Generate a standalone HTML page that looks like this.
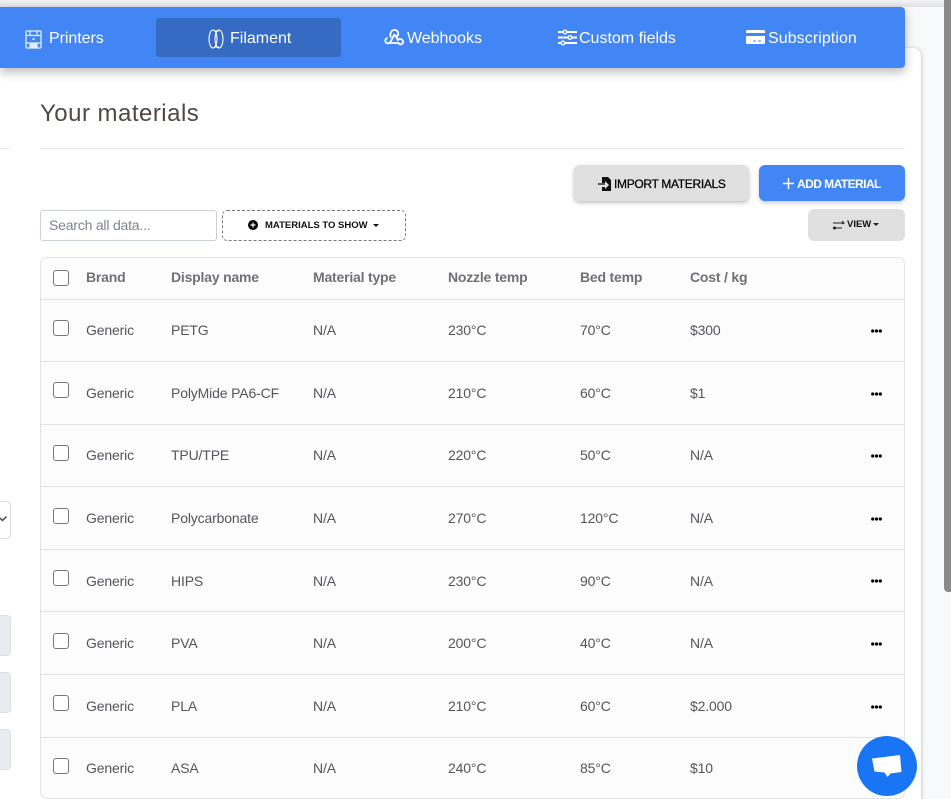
<!DOCTYPE html>
<html><head><meta charset="utf-8">
<style>
html,body{margin:0;padding:0;width:951px;height:799px;overflow:hidden;background:#f8f9fb;font-family:"Liberation Sans",sans-serif}
#r{position:relative;width:951px;height:799px;overflow:hidden}
#r div,#r span.a,#r svg{position:absolute}
.t{position:absolute;white-space:nowrap;line-height:20px}
.n{color:#fff;font-size:16px;top:28px}
.h{font-weight:bold;font-size:14px;color:#707076;top:267px;letter-spacing:-.2px}
.c{font-size:14px;color:#55555b;letter-spacing:-.15px}
.cb{left:53px;width:14px;height:14px;border:1px solid #77777c;border-radius:3px;background:#fff}
.ln{left:41px;width:863px;height:1px;background:#e2e3e7}
.dots{left:871px;width:11px;height:4px}
</style></head><body><div id="r">
<div style="left:0;top:0;width:951px;height:7px;background:linear-gradient(#f3f3f5,#e2e2e6)"></div>
<div style="left:0;top:48px;width:921px;height:760px;background:#fff;border-radius:0 8px 0 0;box-shadow:1px 0 3px rgba(0,0,0,.18)"></div>
<div style="left:944px;top:0;width:7px;height:592px;background:#8a8a8a;border-radius:0 0 0 4px"></div>

<div style="left:0;top:7px;width:905px;height:61px;background:#4285f4;border-radius:0 4px 4px 0;box-shadow:0 4px 10px rgba(0,0,0,.28)"></div>
<div style="left:156px;top:18px;width:185px;height:39px;background:#366bc3;border-radius:3px"></div>

<svg style="left:25px;top:30px" width="17" height="19" viewBox="0 0 17 19" fill="none" stroke="#fff" stroke-width="1.300" opacity=".85"><rect x="1" y="1" width="15" height="17" rx="1"/><path d="M1 5.500h15M5 1v4.500M12 1v4.500M1 13h15"/><path d="M5 17v-3h7v3z" fill="#fff"/><path d="M8.500 8v2" stroke-width="2"/></svg>
<span class="t n" style="left:49px;top:28px;letter-spacing:-.05px;top:29px">Printers</span>

<svg style="left:208px;top:29px" width="16" height="20" viewBox="0 0 16 20" fill="none" stroke="#fff" stroke-width="1.100"><ellipse cx="5" cy="10" rx="4" ry="9"/><ellipse cx="11" cy="10" rx="4" ry="9"/><path d="M6 2h5M6 18h5"/></svg>
<span class="t n" style="left:230px;top:29px">Filament</span>

<svg style="left:384px;top:28px" width="20" height="20" viewBox="0 0 20 20" fill="none" stroke="#fff" stroke-width="1.800"><path d="M7 9.500C5.500 7 6.500 2 10.500 2c3.500 0 4.500 3.500 3 6l-3-0.500"/><path d="M10.500 6L7 13c-1 2-3 3-4.500 2-2-1.200-1.500-4.500 1-5"/><path d="M6 15h8.500c1.500 2.500 5 1 4.500-1.500-.4-2.500-3.500-3.500-5-1.500L11 7"/></svg>
<span class="t n" style="left:407px;top:29px;letter-spacing:-.05px">Webhooks</span>

<svg style="left:558px;top:29px" width="19" height="17" viewBox="0 0 19 17" fill="none" stroke="#fff" stroke-width="1.900"><path d="M0 3h5M9 3h10M0 8.500h10M14 8.500h5M0 14h3M7 14h12"/><circle cx="7" cy="3" r="1.800" stroke-width="1.400"/><circle cx="12" cy="8.500" r="1.800" stroke-width="1.400"/><circle cx="5" cy="14" r="1.800" stroke-width="1.400"/></svg>
<span class="t n" style="left:579px;top:29px">Custom fields</span>

<svg style="left:746px;top:30px" width="19" height="14" viewBox="0 0 19 14"><rect width="19" height="14" rx="1.500" fill="#fff"/><rect y="3" width="19" height="3" fill="#4285f4"/><path d="M7 11h3M12 11h3" stroke="#4285f4"/></svg>
<span class="t n" style="left:768px;top:29px;letter-spacing:.07px">Subscription</span>

<span class="t" style="left:40px;top:100px;font-size:24px;line-height:28px;color:#4f4945;letter-spacing:.48px">Your materials</span>
<div style="left:40px;top:148px;width:865px;height:1px;background:#e9eaed"></div>
<div style="left:0;top:148px;width:10px;height:1px;background:#e9eaed"></div>

<div style="left:574px;top:165px;width:175px;height:36px;background:#e0e0e0;border-radius:6px;box-shadow:0 2px 4px rgba(0,0,0,.25)"></div>
<svg style="left:598px;top:177px" width="14" height="14" viewBox="0 0 14 14"><path d="M4 0h6l3 3v11H4v-4h3v2l4-4-4-4v2H4z" fill="#111"/><path d="M0 7h7" stroke="#111" stroke-width="1.300"/></svg>
<span class="t" style="left:614px;top:174px;font-size:12px;color:#000;letter-spacing:-.32px;-webkit-text-stroke:.25px #000">IMPORT MATERIALS</span>

<div style="left:759px;top:165px;width:146px;height:36px;background:#4285f4;border-radius:6px;box-shadow:0 2px 4px rgba(0,0,0,.2)"></div>
<svg style="left:783px;top:178px" width="11" height="11" viewBox="0 0 11 11"><path d="M5.500 0v11M0 5.500h11" stroke="#fff" stroke-width="1.400"/></svg>
<span class="t" style="left:797px;top:174px;font-size:12px;font-weight:bold;color:#fff;letter-spacing:-.55px">ADD MATERIAL</span>

<div style="left:808px;top:209px;width:97px;height:32px;background:#e0e0e0;border-radius:6px"></div>
<svg style="left:833px;top:220px" width="12" height="10" viewBox="0 0 12 10" fill="none" stroke="#222"><path d="M0 3h11M0 8h9"/><path d="M9 1l2 2-2 1"/><circle cx="1.500" cy="8" r="1"/></svg>
<span class="t" style="left:847px;top:215px;font-size:9.500px;font-weight:bold;color:#111">VIEW</span>
<div style="left:873px;top:223px;width:0;height:0;border:3px solid transparent;border-top-color:#222;border-bottom:0"></div>

<div style="left:40px;top:210px;width:175px;height:29px;border:1px solid #ccd0d8;border-radius:3px;background:#fff"></div>
<span class="t" style="left:49px;top:215px;font-size:14px;color:#7f848c;letter-spacing:-.2px">Search all data...</span>
<div style="left:222px;top:210px;width:182px;height:29px;border:1px dashed #77777c;border-radius:5px;background:#fff"></div>
<svg style="left:248px;top:220px" width="10" height="10" viewBox="0 0 10 10"><circle cx="5" cy="5" r="5" fill="#000"/><path d="M5 2.500v5M2.500 5h5" stroke="#fff" stroke-width="1.200"/></svg>
<span class="t" style="left:265px;top:216px;font-size:9.500px;font-weight:bold;color:#111">MATERIALS TO SHOW</span>
<div style="left:373px;top:224px;width:0;height:0;border:3px solid transparent;border-top-color:#111;border-bottom:0"></div>

<div style="left:-10px;top:501px;width:19px;height:36px;border:1px solid #d5d8dd;border-radius:4px;background:#fff"></div>
<svg style="left:0;top:516px" width="7" height="6" viewBox="0 0 7 6" fill="none" stroke="#444" stroke-width="1.500"><path d="M0 2l2.500 2.500L6.500 0.500"/></svg>
<div style="left:-10px;top:615px;width:19px;height:39px;border:1px solid #dcdfe3;border-radius:4px;background:#e9ecef"></div>
<div style="left:-10px;top:672px;width:19px;height:39px;border:1px solid #dcdfe3;border-radius:4px;background:#e9ecef"></div>
<div style="left:-10px;top:729px;width:19px;height:39px;border:1px solid #dcdfe3;border-radius:4px;background:#e9ecef"></div>

<div style="left:40px;top:257px;width:863px;height:540px;background:#fcfcfc;border:1px solid #e2e3e7;border-radius:7px"></div>
<div class="ln" style="top:299px"></div><div class="ln" style="top:361px"></div><div class="ln" style="top:424px"></div><div class="ln" style="top:486px"></div><div class="ln" style="top:549px"></div><div class="ln" style="top:611px"></div><div class="ln" style="top:674px"></div><div class="ln" style="top:737px"></div>

<div class="cb" style="top:270px"></div>
<span class="t h" style="left:86px">Brand</span><span class="t h" style="left:171px">Display name</span><span class="t h" style="left:313px">Material type</span><span class="t h" style="left:448px">Nozzle temp</span><span class="t h" style="left:580px">Bed temp</span><span class="t h" style="left:690px">Cost / kg</span>

<div class="cb" style="top:320px"></div>
<span class="t c" style="left:86px;top:320px">Generic</span><span class="t c" style="left:171px;top:320px">PETG</span><span class="t c" style="left:313px;top:320px">N/A</span><span class="t c" style="left:448px;top:320px">230°C</span><span class="t c" style="left:580px;top:320px">70°C</span><span class="t c" style="left:690px;top:320px">$300</span>
<svg class="dots" style="top:329px" viewBox="0 0 11 4"><circle cx="1.700" cy="2" r="1.600"/><circle cx="5.500" cy="2" r="1.600"/><circle cx="9.300" cy="2" r="1.600"/></svg>

<div class="cb" style="top:382px"></div>
<span class="t c" style="left:86px;top:383px">Generic</span><span class="t c" style="left:171px;top:383px">PolyMide PA6-CF</span><span class="t c" style="left:313px;top:383px">N/A</span><span class="t c" style="left:448px;top:383px">210°C</span><span class="t c" style="left:580px;top:383px">60°C</span><span class="t c" style="left:690px;top:383px">$1</span>
<svg class="dots" style="top:392px" viewBox="0 0 11 4"><circle cx="1.700" cy="2" r="1.600"/><circle cx="5.500" cy="2" r="1.600"/><circle cx="9.300" cy="2" r="1.600"/></svg>

<div class="cb" style="top:445px"></div>
<span class="t c" style="left:86px;top:445px">Generic</span><span class="t c" style="left:171px;top:445px">TPU/TPE</span><span class="t c" style="left:313px;top:445px">N/A</span><span class="t c" style="left:448px;top:445px">220°C</span><span class="t c" style="left:580px;top:445px">50°C</span><span class="t c" style="left:690px;top:445px">N/A</span>
<svg class="dots" style="top:454px" viewBox="0 0 11 4"><circle cx="1.700" cy="2" r="1.600"/><circle cx="5.500" cy="2" r="1.600"/><circle cx="9.300" cy="2" r="1.600"/></svg>

<div class="cb" style="top:508px"></div>
<span class="t c" style="left:86px;top:508px">Generic</span><span class="t c" style="left:171px;top:508px">Polycarbonate</span><span class="t c" style="left:313px;top:508px">N/A</span><span class="t c" style="left:448px;top:508px">270°C</span><span class="t c" style="left:580px;top:508px">120°C</span><span class="t c" style="left:690px;top:508px">N/A</span>
<svg class="dots" style="top:517px" viewBox="0 0 11 4"><circle cx="1.700" cy="2" r="1.600"/><circle cx="5.500" cy="2" r="1.600"/><circle cx="9.300" cy="2" r="1.600"/></svg>

<div class="cb" style="top:570px"></div>
<span class="t c" style="left:86px;top:571px">Generic</span><span class="t c" style="left:171px;top:571px">HIPS</span><span class="t c" style="left:313px;top:571px">N/A</span><span class="t c" style="left:448px;top:571px">230°C</span><span class="t c" style="left:580px;top:571px">90°C</span><span class="t c" style="left:690px;top:571px">N/A</span>
<svg class="dots" style="top:579px" viewBox="0 0 11 4"><circle cx="1.700" cy="2" r="1.600"/><circle cx="5.500" cy="2" r="1.600"/><circle cx="9.300" cy="2" r="1.600"/></svg>

<div class="cb" style="top:633px"></div>
<span class="t c" style="left:86px;top:633px">Generic</span><span class="t c" style="left:171px;top:633px">PVA</span><span class="t c" style="left:313px;top:633px">N/A</span><span class="t c" style="left:448px;top:633px">200°C</span><span class="t c" style="left:580px;top:633px">40°C</span><span class="t c" style="left:690px;top:633px">N/A</span>
<svg class="dots" style="top:642px" viewBox="0 0 11 4"><circle cx="1.700" cy="2" r="1.600"/><circle cx="5.500" cy="2" r="1.600"/><circle cx="9.300" cy="2" r="1.600"/></svg>

<div class="cb" style="top:695px"></div>
<span class="t c" style="left:86px;top:696px">Generic</span><span class="t c" style="left:171px;top:696px">PLA</span><span class="t c" style="left:313px;top:696px">N/A</span><span class="t c" style="left:448px;top:696px">210°C</span><span class="t c" style="left:580px;top:696px">60°C</span><span class="t c" style="left:690px;top:696px">$2.000</span>
<svg class="dots" style="top:705px" viewBox="0 0 11 4"><circle cx="1.700" cy="2" r="1.600"/><circle cx="5.500" cy="2" r="1.600"/><circle cx="9.300" cy="2" r="1.600"/></svg>

<div class="cb" style="top:758px"></div>
<span class="t c" style="left:86px;top:758px">Generic</span><span class="t c" style="left:171px;top:758px">ASA</span><span class="t c" style="left:313px;top:758px">N/A</span><span class="t c" style="left:448px;top:758px">240°C</span><span class="t c" style="left:580px;top:758px">85°C</span><span class="t c" style="left:690px;top:758px">$10</span>

<svg style="left:857px;top:736px" width="60" height="60" viewBox="0 0 60 60"><circle cx="30" cy="30" r="30" fill="#1a75f5"/><path d="M15 22.500L43 19l1.500 17-11 1.500-3 3.500-3-4.500-10 -1z" fill="#fff"/></svg>
</div></body></html>
